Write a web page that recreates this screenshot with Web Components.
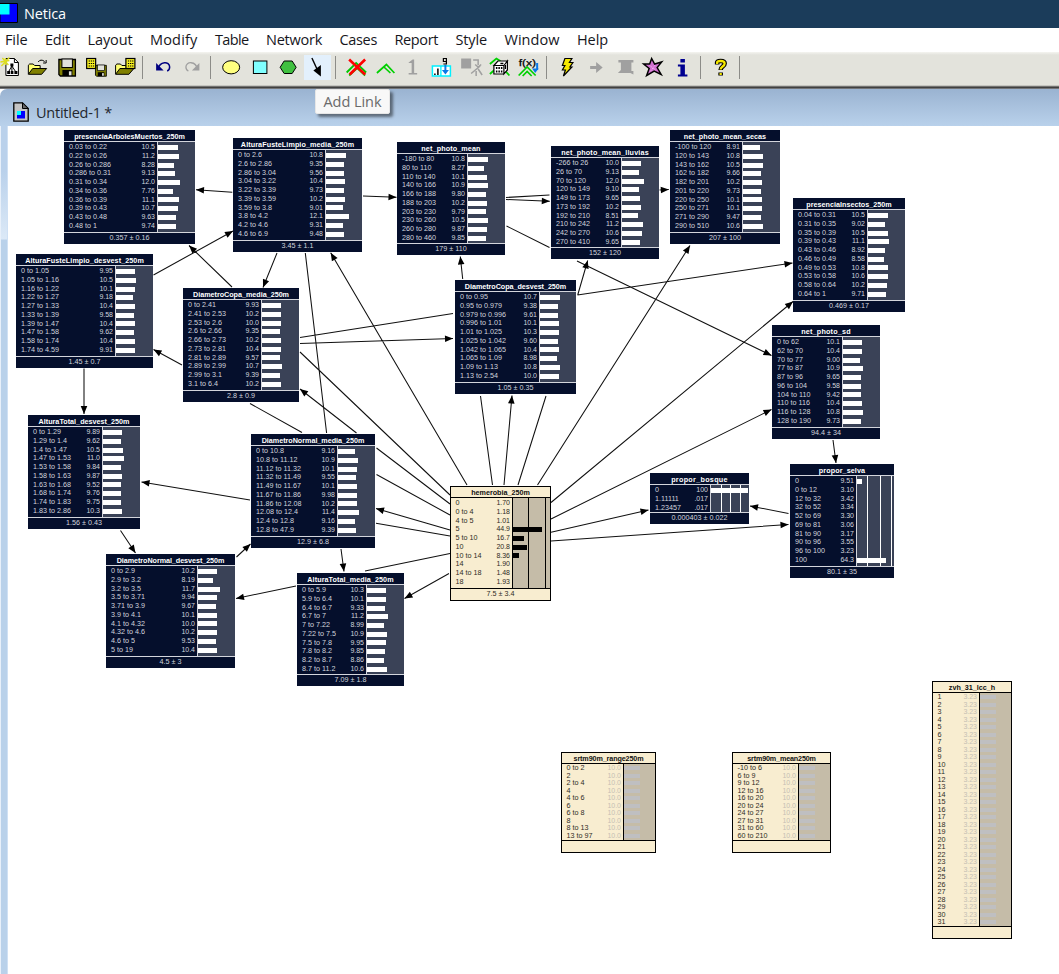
<!DOCTYPE html>
<html lang="en"><head><meta charset="utf-8"><title>Netica</title>
<style>html,body{margin:0;height:100%;overflow:hidden;background:#fff}</style></head>
<body><netica-app></netica-app>
<script>
const ctx = document.createElement('canvas').getContext('2d');
const shadow = (el, html) => { el.attachShadow({mode:'open'}).innerHTML = html; };

/* One line of text, spaced so that it fills the given width. */
class FitText extends HTMLElement {
  connectedCallback() {
    if (this.shadowRoot) return;
    const text = this.textContent, font = this.getAttribute('font'), w = +this.getAttribute('w');
    ctx.font = font;
    const gap = (w - ctx.measureText(text).width) / text.length;
    shadow(this, `<style>:host{display:block;width:${w}px;white-space:nowrap;flex:none;font:${font};letter-spacing:${gap.toFixed(3)}px}</style><slot></slot>`);
  }
}
customElements.define('fit-text', FitText);

class TitleBar extends HTMLElement {
  connectedCallback() {
    shadow(this, `<style>:host{display:flex;align-items:center;height:28px;background:#1b3c5a;color:#fff}
      svg{display:block;margin-right:6px}fit-text{margin-top:-1px}</style>
      <svg width="18" height="28"><path d="M0 3.5H17.5V22.5H0Z" fill="#00f" stroke="#000"/><path d="M0 4H9.500V14.500H0Z" fill="#0ff"/></svg>
      <fit-text w="42" font="14.500px 'Open Sans',sans-serif">${this.textContent}</fit-text>`);
  }
}
customElements.define('title-bar', TitleBar);

class MenuBar extends HTMLElement {
  connectedCallback() {
    const m = [['File',22.500],['Edit',25],['Layout',45],['Modify',47.500],['Table',33.500],['Network',56],['Cases',37.500],['Report',43.500],['Style',31.500],['Window',55],['Help',31]];
    shadow(this, `<style>:host{display:flex;align-items:center;gap:17.500px;height:24px;padding:0 0 1px 5px;box-sizing:border-box;background:#fff;color:#16161c}</style>` +
      m.map(([t,w]) => `<fit-text w="${w}" font="14.500px 'Open Sans',sans-serif">${t}</fit-text>`).join(''));
  }
}
customElements.define('menu-bar', MenuBar);

const floppy = (x,y,s) => `<g transform="translate(${x} ${y}) scale(${s})"><path d="M.5 .5H17V17H2L.5 15.500Z" fill="#808000" stroke="#000" stroke-width="1.300"/><rect x="3.500" y="0" width="10.500" height="8.500" fill="#e3e3dc" stroke="#000"/><rect x="4" y="11" width="10" height="6" fill="#000"/><rect x="10.500" y="12.300" width="2.600" height="4" fill="#e3e3dc"/></g>`;
const folder = (x,y) => `<g transform="translate(${x} ${y})"><path d="M.7 11.500V2.700L2 1.500H5.500L7 3H12.500V6" fill="#ffff70" stroke="#000"/><path d="M.7 11.800L5 6H19L14 11.800Z" fill="#808000" stroke="#000"/></g>`;
const sheet = (x,y) => `<g transform="translate(${x} ${y})"><rect x=".5" y=".5" width="9" height="10" fill="#f5ee20" stroke="#000" stroke-width="1.200"/><path d="M2.500 3H8M2.500 5.500H8M2.500 8H8" stroke="#000" stroke-width="1.100" stroke-dasharray="1.300 .8"/></g>`;
const G = '#a0a0a0';
const icons = {
  new: `<path d="M5.500 57.500H14L18 61.500V74.500H5.500Z" fill="#fff" stroke="#000"/><path d="M14 57.500V61.500H18" fill="none" stroke="#000"/><path d="M11.500 65L8 71M11.500 65L15.500 71M11.500 64V71" stroke="#000"/><path d="M10 62.500h3v3h-3zM6.800 70h3v3h-3zM10.500 70h2.500v3h-2.500zM14 70h3v3h-3z"/><path d="M0 61L9 59.500M2 57L8 64M9 56.500L1 65M5 57V64" stroke="#dede20" stroke-width="1.300"/>`,
  open: folder(28,61.500) + `<path d="M38.500 61Q41 57.500 45 60.500M46.500 59V62H43.500" fill="none" stroke="#000"/>`,
  save: floppy(58.500,58,1),
  savecase: floppy(95,64,.66) + sheet(86,57),
  opencase: folder(114.500,61.500) + sheet(125,57),
  undo: `<path d="M158.500 68C160 60 170 60 170 66Q170 69 167.500 70" fill="none" stroke="#000080" stroke-width="1.500"/><path d="M156.500 62V69.500H164Z" fill="#000080"/>`,
  redo: `<path d="M197.500 68C196 60 186 60 186 66Q186 69 188.500 70" fill="none" stroke="${G}" stroke-width="1.300"/><path d="M199.500 62V69.500H192Z" fill="${G}"/>`,
  ellipse: `<ellipse cx="231" cy="66.300" rx="8.500" ry="6.600" fill="#ffff80" stroke="#000"/>`,
  rect: `<rect x="253" y="60" width="13.500" height="12.500" fill="#80ffff" stroke="#000"/>`,
  hex: `<path d="M280.500 66.300L284.500 60H292.500L296.500 66.300L292.500 72.500H284.500Z" fill="#40c040" stroke="#000"/>`,
  link: `<path d="M312 57L318 70" stroke="#000" stroke-width="1.400"/><path d="M321 64V75.500L313.500 69.500Z"/>`,
  nocompile: `<path d="M346.500 71.500L356 62L366 71.500M349 74.500L357 67L365 74.500" fill="none" stroke="#00c800" stroke-width="1.800"/><path d="M349 58.500L365 73.500M365 58.500L349.500 73.500" stroke="#f00" stroke-width="2.600"/>`,
  compile: `<path d="M376.500 72L386 63.500L394 72M383 65.500L390 72" fill="none" stroke="#00d000" stroke-width="1.700"/>`,
  one: `<path d="M409 61.500L413 58.500H414.500V72H417.500V73.500H409V72H412V62H409Z" fill="${G}"/>`,
  find: `<rect x="432.500" y="65" width="18" height="10" fill="#fff" stroke="#00f0ff" stroke-width="1.500"/><path d="M441 65V75" stroke="#00f0ff" stroke-width="1.300"/><path d="M435 72.500V74M438 67.500V74" stroke="#000" stroke-width="1.500"/><path d="M446.500 57.500h-3v3h3zM446.500 58V63H443.500" fill="none" stroke="#000" stroke-width="1.200"/><path d="M445.500 64V71" stroke="#0878e8" stroke-width="2"/><path d="M442 69H449L445.500 73.500Z" fill="#0878e8"/>`,
  absorb: `<path d="M461 57.500H471V67.500H461Z" fill="${G}"/><path d="M473 59H478V64M475 63.500L478 66L481 63.500M480 65L471 72.500M476 70V75M478 68L482 74" fill="none" stroke="${G}" stroke-width="1.500"/>`,
  dice: `<path d="M489.500 63L496 57.500L500 60M489.500 73L494 69M503 68L509 74.500" fill="none" stroke="#00d000" stroke-width="1.800"/><path d="M493.500 64.500L497.500 60H507L503.500 64.500ZM493.500 64.500H503.500V73H493.500ZM503.500 64.500L507 60V69L503.500 73Z" fill="#fff" stroke="#000" stroke-width="1.200"/><path d="M495.500 67H502M495.500 70.500H502" stroke="#000" stroke-width="1.800" stroke-dasharray="1.500 1"/><path d="M505 64V68M500 62.500H503" stroke="#000" stroke-width="1.300"/>`,
  fx: `<text x="519" y="65" font-family="Liberation Sans" font-size="9.500" stroke="#000" stroke-width=".25" textLength="17.500" lengthAdjust="spacingAndGlyphs">f(x)</text><path d="M519 74.500L527.500 66L536 74.500M523 75L527.500 70.500L532 75" fill="none" stroke="#00d000" stroke-width="1.700"/><path d="M537.500 62V69" stroke="#0878e8" stroke-width="2"/><path d="M532.500 67.500H539L535.500 72Z" fill="#0878e8"/>`,
  bolt: `<path d="M565 57.500H572L569.500 61.500H573L570 66H572L563.500 75L565.500 69H562.500L565 64.500H562.500Z" fill="#f5e800" stroke="#000" stroke-width="1.200"/>`,
  go: `<path d="M590 65H596V61L602.500 66.500L596 72V68H590Z" fill="${G}"/>`,
  table: `<path d="M618 59H633V61.500H631V70H633V73.500L630 72H617.500L620.500 69V61.500H618Z" fill="${G}"/>`,
  star: `<path d="M652 57.500L655 63L662 61L657.500 66.500L661.500 73.500L654.500 70L647 74.500L649.500 67.500L644 63L650 63Z" fill="#d070d0" stroke="#000" stroke-width="1.500"/><path d="M650 64.500L656 69M655.500 64L651 70" stroke="#ffb8ff" stroke-width="1" stroke-dasharray="1 1"/>`,
  info: `<path d="M680.500 58H685V61.500H680.500ZM678 63.500H685V73.500H687.500V75.500H678V73.500H680.500V65.500H678Z" fill="#000090"/>`,
  help: `<path d="M717 63.500V61.500Q717 60 720.500 60Q724.500 60 724.500 62.500Q724.500 64 722.500 65.500Q720.500 67 720.500 69M720.500 71.500V74.500" fill="none" stroke="#000" stroke-width="4.600"/><path d="M717 63V61.500Q717 60 720.500 60Q724.500 60 724.500 62.500Q724.500 64 722.500 65.500Q720.500 67 720.500 68.500M720.500 72V74" fill="none" stroke="#f5e800" stroke-width="2.300"/>`
};
class ToolIcon extends HTMLElement {
  connectedCallback() {
    const x = this.getAttribute('x');
    shadow(this, `<style>:host{display:block;flex:none;width:28.750px;height:27px}:host([active]){background:linear-gradient(#e3f0fc,#e3f0fc) center/27px 25px no-repeat}svg{display:block}</style>
      <svg width="28.750" height="27" viewBox="${x} 53 28.750 27">${icons[this.getAttribute('name')]}</svg>`);
  }
}
customElements.define('tool-icon', ToolIcon);

class ToolBar extends HTMLElement {
  connectedCallback() {
    const groups = ['new open save savecase opencase','undo redo','ellipse rect hex link','nocompile compile one find absorb dice fx','bolt go table star info','help'];
    let x = -4.400, h = '';
    for (const g of groups) {
      for (const n of g.split(' ')) { h += `<tool-icon name="${n}" x="${x.toFixed(2)}"${n==='link'?' active':''}></tool-icon>`; x += 28.750; }
      h += '<i></i>'; x += 10;
    }
    shadow(this, `<style>:host{display:flex;align-items:center;height:37px;box-sizing:border-box;padding:0 0 7px 0;overflow:hidden;background:linear-gradient(#f4f4f0,#e3e3dc 3px,#e3e3dc 33px,#a8a8a4 34px,#3c3c3c 35px,#444 36px,#a0a4aa 37px)}
      tool-icon:first-of-type{margin-left:-4.400px}
      i{flex:none;width:10px;height:23px;background:linear-gradient(#8c8c88,#8c8c88) 3px 0/1px 100% no-repeat}</style>` + h);
  }
}
customElements.define('tool-bar', ToolBar);

class DocHeader extends HTMLElement {
  connectedCallback() {
    shadow(this, `<style>:host{display:flex;align-items:center;height:37px;padding:9px 0 0 13px;box-sizing:border-box;background:linear-gradient(#9ab3d1,#b9d1eb);color:#23272e;border-radius:7px 0 0 0}svg{display:block;margin-right:7px}</style>
      <svg width="16" height="20"><path d="M.8 .8H9.500L15.200 6.500V19.200H.8Z" fill="#c4c4c4" stroke="#000" stroke-width="1.300"/><path d="M9.500 .8V6.500H15.200Z" fill="#666" stroke="#000"/><path d="M4 9H12V16.500H4Z" fill="#00f"/><path d="M4 9H8V13H4Z" fill="#0ff"/></svg>
      <fit-text w="76" font="14.500px 'Open Sans',sans-serif">${this.textContent}</fit-text>`);
  }
}
customElements.define('doc-header', DocHeader);

class ToolTip extends HTMLElement {
  connectedCallback() {
    shadow(this, `<style>:host{position:absolute;left:315px;top:89px;width:75px;height:25px;box-sizing:border-box;display:flex;align-items:center;justify-content:center;background:#f8f8f8;border:1px solid #e6e6e6;border-radius:2px;box-shadow:3px 3px 3px #0007;color:#6a6a6a}</style>
      <fit-text w="58" font="14.500px 'Open Sans',sans-serif">${this.textContent}</fit-text>`);
  }
}
customElements.define('tool-tip', ToolTip);

/* x, y, width, height, bar column, title, title width, rows "label|value", summary, options */
const nodes = [
[64,130,131,114,158,'presenciaArbolesMuertos_250m',110.700,'0.03 to 0.22|10.5;0.22 to 0.26|11.2;0.26 to 0.286|8.28;0.286 to 0.31|9.13;0.31 to 0.34|12.0;0.34 to 0.36|7.76;0.36 to 0.39|11.1;0.39 to 0.43|10.7;0.43 to 0.48|9.63;0.48 to 1|9.74','0.357 ± 0.16'],
[233,138,129,114,326,'AlturaFusteLimpio_media_250m',113.300,'0 to 2.6|10.8;2.6 to 2.86|9.35;2.86 to 3.04|9.56;3.04 to 3.22|10.4;3.22 to 3.39|9.73;3.39 to 3.59|10.2;3.59 to 3.8|9.01;3.8 to 4.2|12.1;4.2 to 4.6|9.31;4.6 to 6.9|9.48','3.45 ± 1.1'],
[16,254,137,114,116,'AlturaFusteLimpio_desvest_250m',118.700,'0 to 1.05|9.95;1.05 to 1.16|10.5;1.16 to 1.22|10.1;1.22 to 1.27|9.18;1.27 to 1.33|10.4;1.33 to 1.39|9.58;1.39 to 1.47|10.4;1.47 to 1.58|9.62;1.58 to 1.74|10.4;1.74 to 4.59|9.91','1.45 ± 0.7'],
[183,288,116,114,262,'DiametroCopa_media_250m',96,'0 to 2.41|9.93;2.41 to 2.53|10.2;2.53 to 2.6|10.0;2.6 to 2.66|9.35;2.66 to 2.73|10.2;2.73 to 2.81|10.4;2.81 to 2.89|9.57;2.89 to 2.99|10.7;2.99 to 3.1|9.39;3.1 to 6.4|10.2','2.8 ± 0.9'],
[397,142,108,113,468,'net_photo_mean',59.300,'-180 to 80|10.8;80 to 110|8.27;110 to 140|10.1;140 to 166|10.9;166 to 188|9.80;188 to 203|10.2;203 to 230|9.79;230 to 260|10.5;260 to 280|9.87;280 to 460|9.85','179 ± 110'],
[551,146,108,113,622,'net_photo_mean_lluvias',87.700,'-266 to 26|10.0;26 to 70|9.13;70 to 120|12.0;120 to 149|9.10;149 to 173|9.65;173 to 192|10.2;192 to 210|8.51;210 to 242|11.2;242 to 270|10.6;270 to 410|9.65','152 ± 120'],
[455,280,121,114,540,'DiametroCopa_desvest_250m',101.300,'0 to 0.95|10.7;0.95 to 0.979|9.38;0.979 to 0.996|9.61;0.996 to 1.01|10.1;1.01 to 1.025|10.3;1.025 to 1.042|9.60;1.042 to 1.065|10.4;1.065 to 1.09|8.98;1.09 to 1.13|10.8;1.13 to 2.54|10.0','1.05 ± 0.35'],
[670,130,110,114,743,'net_photo_mean_secas',82.300,'-100 to 120|8.91;120 to 143|10.8;143 to 162|10.5;162 to 182|9.66;182 to 201|10.2;201 to 220|9.73;220 to 250|10.1;250 to 271|10.1;271 to 290|9.47;290 to 510|10.6','207 ± 100'],
[793,198,112,114,868,'presenciaInsectos_250m',85.300,'0.04 to 0.31|10.5;0.31 to 0.35|9.02;0.35 to 0.39|10.5;0.39 to 0.43|11.1;0.43 to 0.46|8.92;0.46 to 0.49|8.58;0.49 to 0.53|10.8;0.53 to 0.58|10.6;0.58 to 0.64|10.2;0.64 to 1|9.71','0.469 ± 0.17'],
[772,325,108,114,843,'net_photo_sd',49.700,'0 to 62|10.1;62 to 70|10.4;70 to 77|9.00;77 to 87|10.9;87 to 96|9.65;96 to 104|9.58;104 to 110|9.42;110 to 116|10.4;116 to 128|10.8;128 to 190|9.73','94.4 ± 34'],
[28,415,112,114,103,'AlturaTotal_desvest_250m',91,'0 to 1.29|9.89;1.29 to 1.4|9.62;1.4 to 1.47|10.5;1.47 to 1.53|11.0;1.53 to 1.58|9.84;1.58 to 1.63|9.87;1.63 to 1.68|9.52;1.68 to 1.74|9.76;1.74 to 1.83|9.75;1.83 to 2.86|10.3','1.56 ± 0.43'],
[106,554,129,114,198,'DiametroNormal_desvest_250m',107.700,'0 to 2.9|10.2;2.9 to 3.2|8.19;3.2 to 3.5|11.7;3.5 to 3.71|9.94;3.71 to 3.9|9.67;3.9 to 4.1|10.1;4.1 to 4.32|10.0;4.32 to 4.6|10.2;4.6 to 5|9.53;5 to 19|10.4','4.5 ± 3'],
[251,434,124,114,338,'DiametroNormal_media_250m',102.700,'0 to 10.8|9.16;10.8 to 11.12|10.9;11.12 to 11.32|10.1;11.32 to 11.49|9.55;11.49 to 11.67|10.1;11.67 to 11.86|9.98;11.86 to 12.08|10.2;12.08 to 12.4|11.4;12.4 to 12.8|9.16;12.8 to 47.9|9.39','12.9 ± 6.8'],
[297,573,107,113,367,'AlturaTotal_media_250m',86.300,'0 to 5.9|10.3;5.9 to 6.4|10.1;6.4 to 6.7|9.33;6.7 to 7|11.2;7 to 7.22|8.99;7.22 to 7.5|10.9;7.5 to 7.8|9.95;7.8 to 8.2|9.85;8.2 to 8.7|8.86;8.7 to 11.2|10.6','7.09 ± 1.8'],
[450,486,101,115,513,'hemerobia_250m',58.700,'0|1.70;0 to 4|1.18;4 to 5|1.01;5|44.9;5 to 10|16.7;10|20.8;10 to 14|8.36;14|1.90;14 to 18|1.48;18|1.93','7.5 ± 3.4',{light:1,k:.65,min:8,grid:[15,32]}],
[650,473,99,51,711,'propor_bosque',56.700,'0|100;1.11111|.017;1.23457|.017','0.000403 ± 0.022',{k:.37,min:8,grid:[10,19,29]}],
[790,464,104,114,857,'propor_selva',46.300,'0|9.51;0 to 12|3.10;12 to 32|3.42;32 to 52|3.34;52 to 69|3.30;69 to 81|3.06;81 to 90|3.17;90 to 96|3.55;96 to 100|3.23;100|64.3','80.1 ± 35',{k:.45,min:8,grid:[10,23,34]}],
[561,752,95,101,624,'srtm90m_range250m',70,['0 to 2','2','2 to 4','4','4 to 6','6','6 to 8','8','8 to 13','13 to 97'].map(t=>t+'|10.0').join(';'),'',{light:1,off:1}],
[732,752,99,101,799,'srtm90m_mean250m',68.700,['-10 to 6','6 to 9','9 to 12','12 to 16','16 to 20','20 to 24','24 to 27','27 to 31','31 to 60','60 to 210'].map(t=>t+'|10.0').join(';'),'',{light:1,off:1}],
[932,681,80,258,980,'zvh_31_lcc_h',46.300,Array.from({length:31},(_,i)=>(i+1)+'|3.23').join(';'),'',{light:1,off:1}]
];
class BeliefNode extends HTMLElement {
  connectedCallback() {
    const [x,y,w,h,s,title,tw,rows,sum,o={}] = nodes[+this.getAttribute('n')];
    const k = o.k || 1.85, min = o.min || 0;
    const bar = v => o.off ? 16 : (v < min ? 0 : Math.round(v*k*2)/2);
    const L = o.light;
    const pitch = o.off ? 7.500 : 8.740;
    const R = rows.split(';').map(r => r.split('|'));
    shadow(this, `<style>
      :host{position:absolute;left:${x}px;top:${y}px;width:${w}px;height:${h}px;box-sizing:border-box;display:flex;flex-direction:column;
        --bg:${L?'#f8edd0':'#050f2c'};--panel:${L?'#c5bca8':'#3a4257'};--line:${L?'#000':'#d3d5dc'};--ink:${L?'#2e2b25':'#d2d5de'};--bar:${o.off?'#bfbfc1':L?'#000':'#fff'};
        background:var(--bg);color:var(--ink);${L?'border:1px solid #000;':''}font:7.200px/${pitch}px 'Liberation Sans',sans-serif}
      header,footer{flex:none;display:flex;justify-content:center;align-items:center;box-sizing:border-box}
      header{border-bottom:1px solid var(--line);height:${L?11:12}px;padding-top:${L?0:1}px;color:${L?'#111':'#fff'}}
      footer{border-top:1px solid var(--line);height:12px}
      main{flex:1;display:flex;min-height:0}
      .txt{width:${s-x-(L?1:0)}px;flex:none;box-sizing:border-box;padding:${o.off?.3:1.200}px ${L?2:2}px 0 ${L?4.500:5}px;border-right:1px solid var(--line)}
      .r{display:flex;justify-content:space-between;height:${pitch}px;white-space:nowrap}
      .r b{font-weight:400;font-size:7px;${o.off?'color:#c4bfb4;':''}}
      .bars{flex:1;position:relative;background:var(--panel);padding-top:${o.off?.3:1.200}px}
      .b{height:${pitch}px;display:flex;align-items:center}
      .b i{display:block;height:${o.off?4:5}px;background:var(--bar)}
      u{position:absolute;top:0;bottom:0;width:1px;background:${L?'#000':'#fff'}}
    </style>
    <header><fit-text w="${tw}" font="bold 7.200px 'Liberation Sans',sans-serif">${title}</fit-text></header>
    <main><div class="txt">${R.map(r=>`<div class="r"><span>${r[0]}</span><b>${r[1]}</b></div>`).join('')}</div>
    <div class="bars">${(o.grid||[]).map(g=>`<u style="left:${g}px"></u>`).join('')}${R.map(r=>`<div class="b"><i style="width:${bar(+r[1])}px"></i></div>`).join('')}</div></main>
    <footer>${sum}</footer>`);
  }
}
customElements.define('belief-node', BeliefNode);

/* Link segments; a 1 in fifth place draws an arrow head at the end point. */
const links = [
[232.300,192.300,196,189.700,1],[153.500,275,233,231,1],[232,287,189,245.500,1],[277,253,263,287.500,1],[305.300,253,326.600,433],[341,549,344,571.500,1],
[363,196,396.500,197.300,1],[467,485,330.700,252.800,1],[300,343.500,453,338.500,1],[300,337.500,453,313.500],[577.500,295,792.500,263,1],
[182,365,153.500,349.500,1],[250,403.500,302,432.500],[376.500,474.500,450,515],[356.500,433,300,389,1],[376.500,448,450,504],[300,352,450,495],
[450,530,376,508.500,1],[450,536,376,523.300],[250,500,141.500,482,1],[84,368.500,84,414,1],[120.500,530.500,135.500,553,1],[236.500,557,250.500,544,1],
[450,553.500,365,571],[296,586,236,598.500,1],[449,573.500,404.500,598.500,1],[504,485,512,395.500,1],[492.500,485,480.500,396],[462.700,279,460.300,256.500,1],
[518,485,546,396],[577.700,295,587.700,260.500,1],[537.500,485,690,245.500,1],[551,502.500,793,301.500,1],[551,519,771.500,409.500,1],[551,532.300,648.500,510,1],
[551,541,788.500,524.500,1],[788.500,513.500,750,506,1],[833,440,836,463,1],[506,199.500,549.800,201.300,1],[506,197.500,549.500,195],[659.500,190,668.800,189.500,1],
[506.500,226,549.500,247.500],[577,261,771.500,355.500,1]
];
class NetworkCanvas extends HTMLElement {
  connectedCallback() {
    const heads = links.filter(l=>l[4]).map(([a,b,c,d])=>{
      const n=Math.hypot(c-a,d-b),ux=(c-a)/n,uy=(d-b)/n,bx=c-8*ux,by=d-8*uy;
      return `M${c} ${d}L${bx-3.3*uy} ${by+3.3*ux}L${bx+3.3*uy} ${by-3.3*ux}Z`;}).join('');
    shadow(this, `<style>:host{display:block;flex:1;background:#fff;overflow:hidden}svg{position:absolute;left:0;top:0;pointer-events:none}</style>
      <svg width="1059" height="974"><path d="${links.map(([a,b,c,d])=>`M${a} ${b}L${c} ${d}`).join('')}" stroke="#111" stroke-width="1.050" fill="none"/><path d="${heads}"/></svg>
      ${nodes.map((_,i)=>`<belief-node n="${i}"></belief-node>`).join('')}`);
  }
}
customElements.define('network-canvas', NetworkCanvas);

class NeticaApp extends HTMLElement {
  connectedCallback() {
    shadow(this, `<style>:host{display:flex;flex-direction:column;position:relative;width:1059px;height:974px;overflow:hidden;background:#fff}
      .win{flex:1;display:flex;min-height:0}
      .edge{flex:none;width:8px;background:linear-gradient(90deg,#e8f0fa 1px,transparent 1px,transparent 7px,#cfe0f4 7px),linear-gradient(#bad1eb 0,#bad1eb 45px,#dce9f7 113px,#b9d1ea 114px)}</style>
      <title-bar>Netica</title-bar><menu-bar></menu-bar><tool-bar></tool-bar><doc-header>Untitled-1 *</doc-header>
      <div class="win"><div class="edge"></div><network-canvas></network-canvas></div><tool-tip>Add Link</tool-tip>`);
  }
}
customElements.define('netica-app', NeticaApp);
</script></body></html>
